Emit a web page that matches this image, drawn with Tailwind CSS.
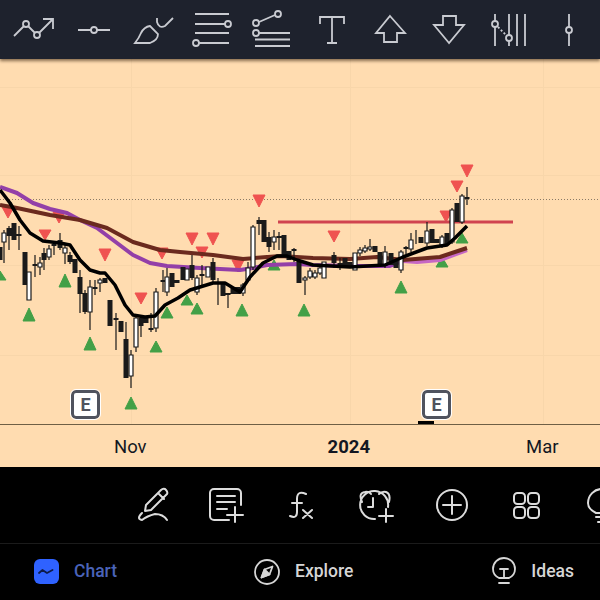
<!doctype html>
<html>
<head>
<meta charset="utf-8">
<script src="https://cdn.jsdelivr.net/npm/@tailwindcss/browser@4"></script>
</head>
<body class="m-0 bg-black">
<div class="w-[600px] h-[600px] overflow-hidden flex flex-col font-['Roboto',sans-serif]">

  <!-- drawing tools -->
  <div class="relative z-10 h-[59px] shrink-0 bg-[#1e222d] pl-[3px] flex shadow-[0_2px_3px_rgba(40,20,0,0.55)] text-[#c9cbd1]">
    <svg class="w-[60px] h-[59px] shrink-0" viewBox="3 0 60 59" fill="none" stroke="currentColor" stroke-width="1.800"><path d="M14 36 24 26M28 26 35 33M39 33 53 19M43 19H53V29"/><circle cx="26" cy="24" r="3"/><circle cx="37" cy="35" r="3"/></svg>
    <svg class="w-[60px] h-[59px] shrink-0" viewBox="63 0 60 59" fill="none" stroke="currentColor" stroke-width="1.800"><path d="M78 30H91M97 30H110"/><circle cx="94" cy="30" r="3"/></svg>
    <svg class="w-[60px] h-[59px] shrink-0" viewBox="123 0 60 59" fill="none" stroke="currentColor" stroke-width="1.800"><path d="M135 43Q139 38 141 33Q144 27 150 26L158 34Q158 40 150 43ZM157 18V22Q159 29 165 26L173 18"/></svg>
    <svg class="w-[60px] h-[59px] shrink-0" viewBox="183 0 60 59" fill="none" stroke="currentColor" stroke-width="1.800"><path d="M195 14H229M195 24H225M195 33H229M199 43H229"/><circle cx="228" cy="24" r="3"/><circle cx="196" cy="43" r="3"/></svg>
    <svg class="w-[60px] h-[59px] shrink-0" viewBox="243 0 60 59" fill="none" stroke="currentColor" stroke-width="1.800"><path d="M259 22 275 15M259 33H290M255 39.500H290M255 46H290"/><circle cx="256" cy="23" r="3"/><circle cx="278" cy="14" r="3"/><circle cx="256" cy="33" r="3"/></svg>
    <svg class="w-[60px] h-[59px] shrink-0" viewBox="303 0 60 59" fill="none" stroke="currentColor" stroke-width="1.800"><path d="M320 24V17H344V24M332 17V43M327 43H337"/></svg>
    <svg class="w-[60px] h-[59px] shrink-0" viewBox="363 0 60 59" fill="none" stroke="currentColor" stroke-width="1.800"><path d="M390 16 405 33H397V42H384V33H376Z"/></svg>
    <svg class="w-[60px] h-[59px] shrink-0" viewBox="423 0 60 59" fill="none" stroke="currentColor" stroke-width="1.800"><path d="M449 43 434 25H443V16H456V25H464Z"/></svg>
    <svg class="w-[60px] h-[59px] shrink-0" viewBox="483 0 60 59" fill="none" stroke="currentColor" stroke-width="1.800"><path d="M495 14V21M495 27V46M509 14V35M509 41V46M517 14V46M525 14V46"/><path d="M498 27 506 35" stroke-dasharray="2 2"/><circle cx="495" cy="24" r="3"/><circle cx="509" cy="38" r="3"/></svg>
    <svg class="w-[60px] h-[59px] shrink-0" viewBox="543 0 60 59" fill="none" stroke="currentColor" stroke-width="1.800"><path d="M569 14V27M569 33V46"/><circle cx="569" cy="30" r="3"/></svg>
  </div>

  <!-- chart pane -->
  <div class="relative h-[365px] shrink-0 bg-[#ffdcb0]">
    <svg class="block w-[600px] h-[365px]" viewBox="0 59 600 365" fill="none">
      <path stroke="#f8d6aa" d="M131.500 59V424M350.500 59V424M543.500 59V424M0 87.500H600M0 175.500H600M0 265.500H600M0 355.500H600"/>
      <path stroke="#8a7a66" stroke-dasharray="1 2" d="M0 199.500H600"/>
      <path fill="#ef5350" stroke="#ef5350" stroke-linejoin="round" d="M2 207h12l-6 11zM39 230h12l-6 10zM53 212h12l-6 11zM99 249h12l-6 12zM156 248h12l-6 11zM186 233h12l-6 12zM207 233h12l-6 12zM196 247h12l-6 11zM232 260h12l-6 12zM253 195h12l-6 12zM328 231h12l-6 11zM135 293h12l-6 11zM440 211h12l-6 11zM451 181h12l-6 11zM461 165h12l-6 12z"/>
      <path fill="#43a047" stroke="#43a047" stroke-linejoin="round" d="M-6 280h12l-6-9zM59 287h12l-6-13zM23 321h12l-6-13zM84 350h12l-6-13zM150 352h12l-6-11zM125 409h12l-6-12zM161 318h12l-6-11zM181 305h12l-6-10zM191 314h12l-6-11zM236 316h12l-6-12zM298 316h12l-6-12zM268 270h12l-6-10zM395 293h12l-6-12zM436 267h12l-6-10zM456 243h12l-6-10z"/>
      <path stroke="#933fa8" stroke-width="4" stroke-linejoin="round" d="M0 187 17 193 33 203 50 209 67 213 80 220 97 228 113 240 133 255 150 263 167 266 200 268 240 270 253 268 267 265 297 264 313 265 350 266 390 266 403 261"/>
      <path stroke="#c668c4" stroke-width="4" stroke-linejoin="round" d="M403 261 417 262 440 260 467 250"/>
      <path stroke="#6b2a1e" stroke-width="4" stroke-linejoin="round" d="M0 205 17 208 50 215 80 220 107 228 133 242 160 250 180 252 213 255 243 259 280 256 313 258 350 259 377 257 403 260 440 257 467 248"/>
      <path stroke="#d0434f" stroke-width="3" d="M278 222H513"/>
      <g stroke="#1a1a1a">
        <path stroke-width="1.200" d="M4 230V263M9 226V250M19 226V250M35 255V277M40 257V275M44 248V270M49 245V260M54 242V255M60 233V250M65 245V264M70 252V264M80 270V313M85 290V314M90 280V330M95 280V295M100 278V292M116 313V350M126 322V345M131 350V388M136 315V352M141 315V337M151 313V332M156 288V332M163 270V292M167 268V296M192 255V280M197 275V295M202 265V285M213 258V282M218 278V305M228 293V308M243 283V296M248 262V282M253 225V270M259 217V235M269 232V252M274 230V250M279 232V250M294 248V262M305 276V295M310 268V279M315 270V279M320 265V275M334 252V268M340 258V270M360 247V256M365 245V253M370 239V251M385 246V268M401 250V273M406 246V254M411 233V252M416 230V244M427 222V246M442 235V248M452 208V244M462 194V224M467 187V205"/>
        <path stroke-width="5" d="M0 247V260M9 228V236M14 223V240M19 234V236M25 252V285M35 264V266M44 253V260M54 244V246M60 240V248M70 255V262M75 259V273M80 277V294M85 293V312M95 287V289M105 278V283M110 300V326M116 318V320M121 321V332M126 339V378M141 318V326M146 317V323M151 328V330M163 280V282M172 273V287M177 280V283M183 267V280M192 265V278M202 274V276M213 262V280M223 283V296M228 293V295M233 287V294M238 287V294M259 220V224M264 220V242M269 237V247M279 236V238M284 235V255M289 251V260M294 249V251M299 262V283M334 255V263M340 263V267M345 258V267M350 262V268M375 246V252M380 252V265M391 253V265M396 260V268M406 247V249M421 237V243M432 229V243M437 239V243M447 233V245M457 203V222M467 197V199"/>
        <path fill="#fff" stroke-width="1.200" d="M2 233h4v9h-4zM27 272h4v28h-4zM38 263h4v4h-4zM47 249h4v8h-4zM63 248h4v5h-4zM88 287h4v25h-4zM98 280h4v3h-4zM129 355h4v21h-4zM134 318h4v29h-4zM154 292h4v36h-4zM165 277h4v15h-4zM185 269h4v11h-4zM195 278h4v14h-4zM206 267h4v10h-4zM241 285h4v8h-4zM246 268h4v12h-4zM251 227h4v40h-4zM272 237h4v5h-4zM303 278h4v2h-4zM308 271h4v6h-4zM313 273h4v4h-4zM318 268h4v5h-4zM322 262h4v16h-4zM353 253h4v17h-4zM358 250h4v3h-4zM363 248h4v3h-4zM368 247h4v2h-4zM383 252h4v13h-4zM399 252h4v18h-4zM409 240h4v9h-4zM425 231h4v12h-4zM440 237h4v9h-4zM450 210h4v32h-4zM460 196h4v26h-4z"/>
      </g>
      <path stroke="#000" stroke-width="3.500" stroke-linejoin="round" d="M0 190 10 203 20 220 30 233 43 241 60 243 70 245 80 260 90 270 100 273 105 273 115 285 125 305 133 315 145 317 155 316 165 305 178 298 190 290 200 287 213 283 225 283 240 292 250 277 263 263 277 256 287 256 297 260 313 265 350 267 385 265 403 257 427 248 447 245 455 238 467 226"/>
    </svg>
    <!-- earnings badges -->
    <span class="absolute left-[71px] top-[331px] w-[29px] h-[29px] flex items-center justify-center rounded-[5px] border-[3px] border-[#50535e] bg-white outline outline-1 outline-white text-[18px] leading-none font-bold text-[#50535e]">E</span>
    <span class="absolute left-[422px] top-[331px] w-[29px] h-[29px] flex items-center justify-center rounded-[5px] border-[3px] border-[#50535e] bg-white outline outline-1 outline-white text-[18px] leading-none font-bold text-[#50535e]">E</span>
    <span class="absolute left-[418px] top-[362px] w-[16px] h-[3px] bg-black"></span>
  </div>

  <!-- time axis -->
  <div class="h-[43px] shrink-0 bg-[#ffdcb0] border-t border-[#6f5f45] flex items-center text-[18.500px] text-[#131722] pt-[3px]">
    <span class="ml-[114px]">Nov</span>
    <span class="ml-[181px] font-bold">2024</span>
    <span class="ml-[156px]">Mar</span>
  </div>

  <!-- action bar -->
  <div class="h-[77px] shrink-0 bg-black border-b border-[#1b1b1b] pl-[114px] flex overflow-hidden text-[#dcdcdc]">
    <svg class="w-[75px] h-[77px] shrink-0" viewBox="114 467 75 77" fill="none" stroke="currentColor" stroke-width="2" stroke-linecap="round" stroke-linejoin="round"><path d="M146 505 145 511 151 510 167 494Q168 492 166 490L165 489Q163 488 161 490ZM158 493 164 499M167 520Q163 514 155 514Q147 516 142 520Q136 519 142 513"/></svg>
    <svg class="w-[75px] h-[77px] shrink-0" viewBox="189 467 75 77" fill="none" stroke="currentColor" stroke-width="2" stroke-linecap="round"><path d="M229 520H214A4 4 0 0 1 210 516V493A4 4 0 0 1 214 489H237A4 4 0 0 1 241 493V505M217 496H235M217 502H235M217 509H227M227 515H243M235 507V522"/></svg>
    <svg class="w-[75px] h-[77px] shrink-0" viewBox="264 467 75 77" fill="none" stroke="currentColor" stroke-width="2" stroke-linecap="round"><path d="M306 494Q297 490 297 499V512Q297 519 290 516M292 503H302M303 510 312 518M312 510 303 518"/></svg>
    <svg class="w-[75px] h-[77px] shrink-0" viewBox="339 467 75 77" fill="none" stroke="currentColor" stroke-width="2" stroke-linecap="round" stroke-linejoin="round"><path d="M388 507A14 14 0 1 0 375 519M362 502Q358 493 365 492Q369 491 371 494M379 494Q382 491 386 492Q391 494 389 502M373 498V507H368M379 516H393M386 509V522"/></svg>
    <svg class="w-[75px] h-[77px] shrink-0" viewBox="414 467 75 77" fill="none" stroke="currentColor" stroke-width="2" stroke-linecap="round"><circle cx="452" cy="505" r="15"/><path d="M443 505H461M452 496V514"/></svg>
    <svg class="w-[75px] h-[77px] shrink-0" viewBox="489 467 75 77" fill="none" stroke="currentColor" stroke-width="2"><rect x="514" y="493" width="11" height="11" rx="3.500"/><rect x="528" y="493" width="11" height="11" rx="3.500"/><rect x="514" y="507" width="11" height="11" rx="3.500"/><rect x="528" y="507" width="11" height="11" rx="3.500"/></svg>
    <svg class="w-[75px] h-[77px] shrink-0" viewBox="564 467 75 77" fill="none" stroke="currentColor" stroke-width="2" stroke-linecap="round"><path d="M596 513Q588 509 588 503A14 14 0 0 1 616 503Q616 509 608 513ZM596 517H608M598 522H606"/></svg>
  </div>

  <!-- bottom navigation -->
  <nav class="flex-1 bg-black flex items-center text-[17.500px] font-medium text-[#d6d6d6] pb-[1px]">
    <span class="ml-[34px] w-[25px] h-[25px] rounded-[6px] bg-[#2f62ff] flex items-center justify-center">
      <svg class="w-[17px] h-[9px]" viewBox="0 0 17 9" fill="none" stroke="#0d1b4a" stroke-width="1.800" stroke-linecap="round" stroke-linejoin="round"><path d="M1 6 4.500 3 9 6 14.500 3"/></svg>
    </span>
    <span class="ml-[15px] text-[#4a63b8]">Chart</span>
    <svg class="ml-[137px] w-[26px] h-[26px]" viewBox="0 0 26 26" fill="none" stroke="currentColor" stroke-width="1.800" stroke-linejoin="round"><circle cx="13" cy="13" r="12"/><path d="M18.500 7.500 15.500 15.500 7.500 18.500 10.500 10.500Z"/><path d="M7.500 18.500 15.500 15.500 10.500 10.500Z" fill="currentColor"/></svg>
    <span class="ml-[15px]">Explore</span>
    <svg class="ml-[138px] w-[26px] h-[30px]" viewBox="0 0 26 30" fill="none" stroke="currentColor" stroke-width="1.800" stroke-linecap="round" stroke-linejoin="round"><path d="M8 21Q2 18 2 12A11 11 0 0 1 24 12Q24 18 18 21ZM9 12H17M13 12V21M8 26H18"/></svg>
    <span class="ml-[14px]">Ideas</span>
  </nav>
</div>
</body>
</html>
